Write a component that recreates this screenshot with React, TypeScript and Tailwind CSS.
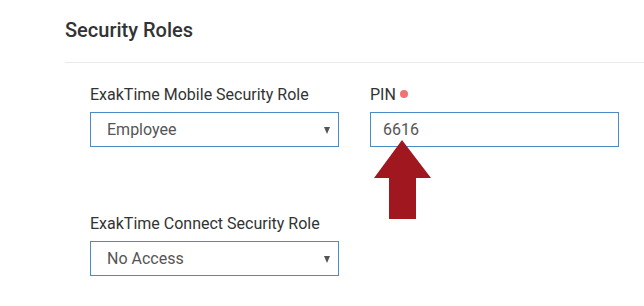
import React from "react";

// Select field with a small dark triangle on the right
function RoleSelect({ value }: { value: string }) {
  return (
    <div className="relative h-[35px] w-[249px]">
      <select
        defaultValue={value}
        className="h-full w-full appearance-none rounded-none border border-[#4a8cc6] bg-white pl-[16px] text-[16px] text-[#555] outline-none"
      >
        <option>{value}</option>
      </select>
      <span className="pointer-events-none absolute right-[9px] top-[15px] h-0 w-0 border-x-[3.5px] border-t-[7px] border-x-transparent border-t-[#555]" />
    </div>
  );
}

export default function App() {
  return (
    <div
      className="h-[306px] w-[644px] overflow-hidden bg-white pl-[65px] pt-[16px] text-[#333]"
      style={{ fontFamily: "Roboto, 'Liberation Sans', sans-serif" }}
    >
      <h2 className="text-[20px] font-medium leading-[28px] text-[#333]">Security Roles</h2>
      <div className="mt-[18px] border-t border-[#e9e9e9]" />

      <div className="mt-[20px] grid grid-cols-[249px_249px] gap-x-[31px] gap-y-[65px] pl-[25px]">
        <div>
          <label className="block text-[16px] leading-[24px]">ExakTime Mobile Security Role</label>
          <div className="mt-[5px]">
            <RoleSelect value="Employee" />
          </div>
        </div>

        <div className="relative">
          <label className="flex items-center gap-[4px] text-[16px] leading-[24px]">
            PIN
            <span className="mb-[2px] h-[8px] w-[8px] rounded-full bg-[#f07272]" />
          </label>
          <input
            defaultValue="6616"
            className="mt-[5px] h-[35px] w-[249px] rounded-none border border-[#4a8cc6] bg-white pl-[12px] text-[16px] text-[#555] outline-none"
          />
          {/* annotation arrow pointing at the PIN field */}
          <svg
            className="absolute left-[4px] top-[57px]"
            width="58"
            height="80"
            viewBox="0 0 58 80"
          >
            <polygon
              points="28,0 57,38 42,38 42,79 15,79 15,38 0,38"
              fill="#a1171f"
            />
          </svg>
        </div>

        <div>
          <label className="block text-[16px] leading-[24px]">ExakTime Connect Security Role</label>
          <div className="mt-[5px]">
            <RoleSelect value="No Access" />
          </div>
        </div>
      </div>
    </div>
  );
}
